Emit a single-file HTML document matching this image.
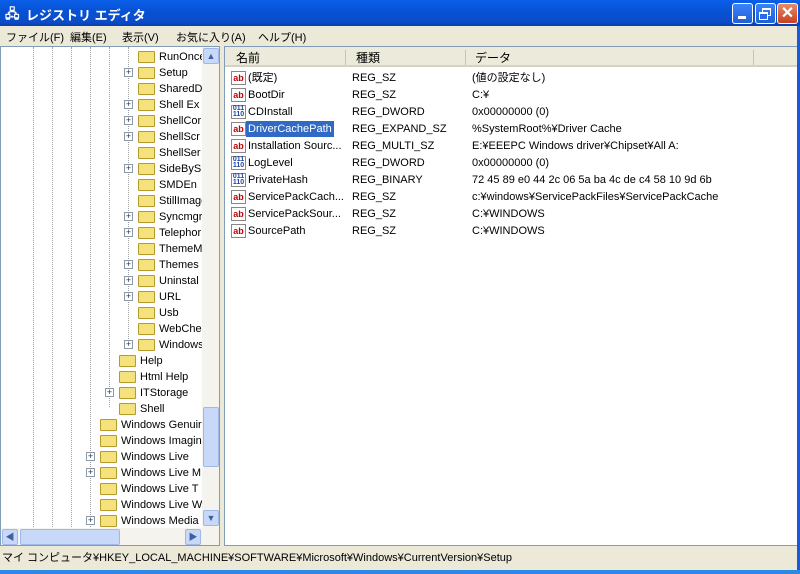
<!DOCTYPE html>
<html><head><meta charset="utf-8"><style>
*{margin:0;padding:0;box-sizing:border-box}
body{width:800px;height:574px;overflow:hidden;background:#ece9d8;font-family:"Liberation Sans","Noto Sans CJK JP",sans-serif;font-size:11px;color:#000;position:relative}
.abs{position:absolute}
#title{left:0;top:0;width:800px;height:26px;background:linear-gradient(#0a5fe8,#0852d6 40%,#0a4cc8 85%,#0a3fa8);color:#fff;font-weight:bold;font-size:13px}
.btn{top:3px;width:21px;height:21px;border:1px solid #fff;border-radius:3px;background:linear-gradient(#3c82f8,#1f5fd8)}
#menu{left:0;top:26px;width:800px;height:20px;font-size:11px}
#menu span{position:absolute;top:3px}
#left{left:0;top:46px;width:220px;height:500px;background:#fff;border:1px solid #7f9db9;overflow:hidden}
#right{left:224px;top:46px;width:576px;height:500px;background:#fff;border:1px solid #7f9db9;border-right:3px solid #7f9db9;overflow:hidden}
.t{position:absolute;font-size:11px;white-space:nowrap;height:16px;line-height:16px}
.fd{position:absolute;width:17px;height:12px;background:#f5e27c;border:1px solid #b59a2c;border-radius:1px}
.pl{position:absolute;width:9px;height:9px;border:1px solid #8a9aaa;background:#fff;font-size:9px;line-height:7px;text-align:center;color:#333}
.vl{position:absolute;width:0;border-left:1px dotted #a0a0a0}
.ic{position:absolute;width:15px;height:14px;border:1px solid #888;background:#fff;font-size:9px;font-weight:bold;line-height:12px;text-align:center;color:#b00}
.ib{color:#2040a0;font-size:7px;line-height:6px}
#status{left:0;top:546px;width:800px;height:24px;font-size:11px;line-height:24px;padding-left:2px}
</style></head><body>
<div id="title" class="abs"><span class="abs" style="left:5px;top:5px;font-size:13px">🖧</span><span class="abs" style="left:26px;top:5px">レジストリ エディタ</span>
<div class="btn abs" style="left:732px"><div class="abs" style="left:5px;top:12px;width:8px;height:3px;background:#fff"></div></div>
<div class="btn abs" style="left:755px"><div class="abs" style="left:6px;top:4px;width:9px;height:8px;border:1px solid #fff;border-top-width:2px"></div><div class="abs" style="left:3px;top:8px;width:9px;height:8px;border:1px solid #fff;border-top-width:2px;background:#2a6ae8"></div></div>
<div class="btn abs" style="left:777px;background:linear-gradient(#e88a6a,#c84020);color:#fff;font-size:16px;text-align:center;line-height:19px">✕</div>
</div>
<div id="menu" class="abs"><span style="left:6px">ファイル(F)</span><span style="left:70px">編集(E)</span><span style="left:122px">表示(V)</span><span style="left:176px">お気に入り(A)</span><span style="left:258px">ヘルプ(H)</span></div>
<div id="left" class="abs">
<div class="vl" style="left:32px;top:0;height:480px"></div><div class="vl" style="left:51px;top:0;height:480px"></div><div class="vl" style="left:70px;top:0;height:480px"></div><div class="vl" style="left:89px;top:0;height:480px"></div><div class="vl" style="left:108px;top:0;height:360px"></div><div class="vl" style="left:127px;top:0;height:300px"></div>
<div id="rows"></div>
<div class="abs" style="left:201px;top:0;width:17px;height:481px;background:#f4f3ee"></div>
<div class="abs" style="left:202px;top:1px;width:16px;height:16px;background:#c8d8f8;border:1px solid #a0b8e8;border-radius:2px;text-align:center;font-size:9px;color:#4060a0;line-height:14px">▲</div>
<div class="abs" style="left:202px;top:360px;width:16px;height:60px;background:#c8d8f8;border:1px solid #a0b8e8;border-radius:2px"></div>
<div class="abs" style="left:202px;top:463px;width:16px;height:16px;background:#c8d8f8;border:1px solid #a0b8e8;border-radius:2px;text-align:center;font-size:9px;color:#4060a0;line-height:14px">▼</div>
<div class="abs" style="left:0;top:481px;width:218px;height:17px;background:#f4f3ee"></div>
<div class="abs" style="left:1px;top:482px;width:16px;height:16px;background:#c8d8f8;border:1px solid #a0b8e8;border-radius:2px;text-align:center;font-size:9px;color:#4060a0;line-height:14px">◀</div>
<div class="abs" style="left:19px;top:482px;width:100px;height:16px;background:#c8d8f8;border:1px solid #a0b8e8;border-radius:2px"></div>
<div class="abs" style="left:184px;top:482px;width:16px;height:16px;background:#c8d8f8;border:1px solid #a0b8e8;border-radius:2px;text-align:center;font-size:9px;color:#4060a0;line-height:14px">▶</div>
</div>
<div id="right" class="abs">
<div class="abs" style="left:0;top:0;width:576px;height:20px;background:#ebeadb;border-bottom:2px solid #d6d2c2"></div>
<div class="abs" style="left:120px;top:3px;width:1px;height:15px;background:#c7c5b2"></div><div class="abs" style="left:240px;top:3px;width:1px;height:15px;background:#c7c5b2"></div><div class="abs" style="left:528px;top:3px;width:1px;height:15px;background:#c7c5b2"></div>
<span class="t" style="left:11px;top:3px;font-size:12px">名前</span><span class="t" style="left:131px;top:3px;font-size:12px">種類</span><span class="t" style="left:250px;top:3px;font-size:12px">データ</span>
<div id="vals"></div>
</div>
<div id="status" class="abs">マイ コンピュータ¥HKEY_LOCAL_MACHINE¥SOFTWARE¥Microsoft¥Windows¥CurrentVersion¥Setup</div>
<div class="abs" style="left:0;top:570px;width:800px;height:4px;background:#2a8ae8"></div>
<div class="abs" style="left:797px;top:26px;width:3px;height:544px;background:#1a5ad8"></div>
<script>
var tree=[[3,'RunOnce',0],[3,'Setup',1],[3,'SharedD',0],[3,'Shell Ex',1],[3,'ShellCor',1],[3,'ShellScr',1],[3,'ShellSer',0],[3,'SideByS',1],[3,'SMDEn',0],[3,'StillImage',0],[3,'Syncmgr',1],[3,'Telephor',1],[3,'ThemeM',0],[3,'Themes',1],[3,'Uninstal',1],[3,'URL',1],[3,'Usb',0],[3,'WebChe',0],[3,'Windows',1],[2,'Help',0],[2,'Html Help',0],[2,'ITStorage',1],[2,'Shell',0],[1,'Windows Genuir',0],[1,'Windows Imagin',0],[1,'Windows Live',1],[1,'Windows Live M',1],[1,'Windows Live T',0],[1,'Windows Live W',0],[1,'Windows Media',1]];
var h='';tree.forEach(function(r,i){var y=2+i*16;var fx=100+(r[0]-1)*19-1,px=fx-11;
if(r[2])h+='<div class="pl" style="left:'+(px-3)+'px;top:'+(y+3)+'px">+</div>';
h+='<div class="fd" style="left:'+fx+'px;top:'+(y+2)+'px"></div><span class="t" style="left:'+(fx+21)+'px;top:'+(y)+'px">'+r[1]+'</span>';});
document.getElementById('rows').innerHTML=h;
var v=[['ab','(既定)','REG_SZ','(値の設定なし)'],['ab','BootDir','REG_SZ','C:¥'],['01','CDInstall','REG_DWORD','0x00000000 (0)'],['ab','DriverCachePath','REG_EXPAND_SZ','%SystemRoot%¥Driver Cache'],['ab','Installation Sourc...','REG_MULTI_SZ','E:¥EEEPC Windows driver¥Chipset¥All A:'],['01','LogLevel','REG_DWORD','0x00000000 (0)'],['01','PrivateHash','REG_BINARY','72 45 89 e0 44 2c 06 5a ba 4c de c4 58 10 9d 6b'],['ab','ServicePackCach...','REG_SZ','c:¥windows¥ServicePackFiles¥ServicePackCache'],['ab','ServicePackSour...','REG_SZ','C:¥WINDOWS'],['ab','SourcePath','REG_SZ','C:¥WINDOWS']];
h='';v.forEach(function(r,i){var y=23+i*17;
h+='<div class="ic'+(r[0]=='01'?' ib':'')+'" style="left:6px;top:'+(y+1)+'px">'+(r[0]=='01'?'011<br>110':'ab')+'</div>';
h+='<span class="t" style="left:23px;top:'+y+'px;'+(i==3?'background:#316ac5;color:#fff;padding:0 2px;left:21px':'')+'">'+r[1]+'</span>';
h+='<span class="t" style="left:127px;top:'+y+'px">'+r[2]+'</span><span class="t" style="left:247px;top:'+y+'px">'+r[3]+'</span>';});
document.getElementById('vals').innerHTML=h;
</script>
</body></html>
